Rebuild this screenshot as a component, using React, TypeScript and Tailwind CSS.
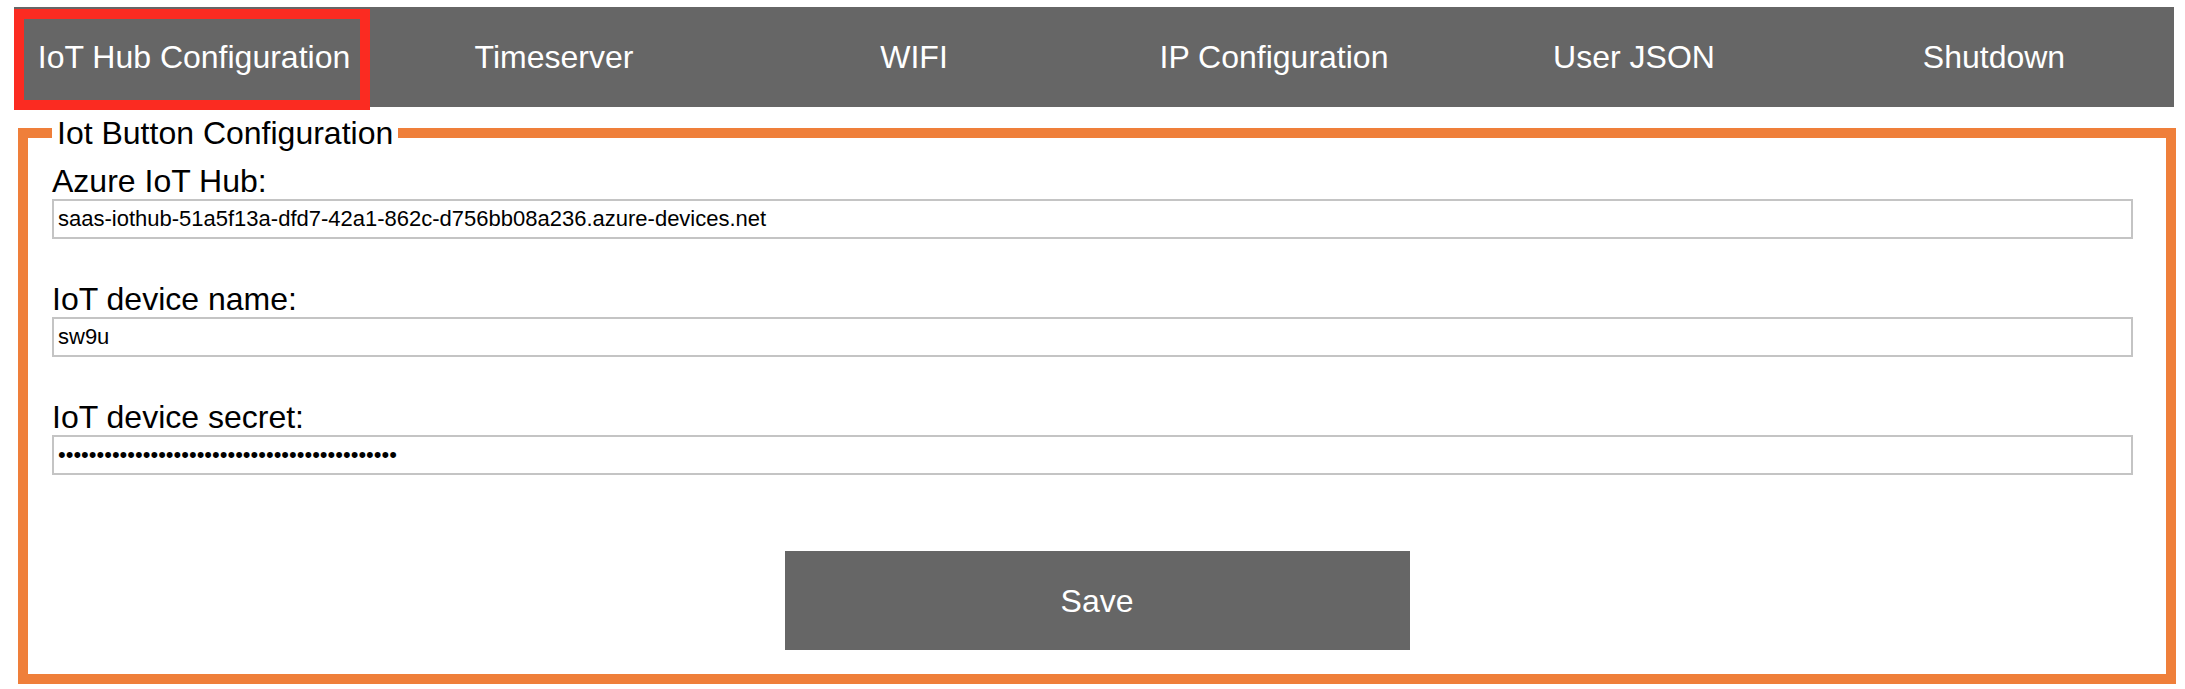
import React, { useState } from 'react';

const tabs = ['IoT Hub Configuration', 'Timeserver', 'WIFI', 'IP Configuration', 'User JSON', 'Shutdown'];

const Field = ({ label, type, value, onChange, first }: { label: string; type: string; value: string; onChange: (v: string) => void; first?: boolean }) => (
  <div className={first ? '' : 'mt-[43px]'}>
    <label className="block h-[35px] text-[32px] leading-[35px] text-black">{label}</label>
    <input
      type={type}
      value={value}
      onChange={(e) => onChange(e.target.value)}
      className="block w-[2081px] h-[40px] border-2 border-[#c4c4c4] bg-white px-[4px] text-[22px] text-black focus:outline-none"
    />
  </div>
);

export default function App() {
  const [hub, setHub] = useState('saas-iothub-51a5f13a-dfd7-42a1-862c-d756bb08a236.azure-devices.net');
  const [name, setName] = useState('sw9u');
  const [secret, setSecret] = useState('abcdefghijklmnopqrstuvwxyzabcdefghijklmnopqr');

  return (
    <div className="w-full min-h-[689px] bg-white pt-[7px] font-['Liberation_Sans',Arial,sans-serif]">
      <nav className="ml-[14px] flex w-[2160px] bg-[#666666]">
        {tabs.map((tab, i) => (
          <div key={tab} className="relative flex h-[100px] w-[360px] items-center justify-center text-[32px] text-white">
            {tab}
            {i === 0 && (
              <div className="pointer-events-none absolute left-0 top-[2px] h-[101px] w-[356px] border-[10px] border-[#fb2b21]" />
            )}
          </div>
        ))}
      </nav>

      <fieldset className="ml-[18px] mt-[2px] w-[2158px] border-[10px] border-[#ef7f3a] pl-[24px] pr-[24px] pt-[7px] pb-[24px]">
        <legend className="px-[5px] text-[32px] text-black">Iot Button Configuration</legend>

        <Field first label="Azure IoT Hub:" type="text" value={hub} onChange={setHub} />
        <Field label="IoT device name:" type="text" value={name} onChange={setName} />
        <Field label="IoT device secret:" type="password" value={secret} onChange={setSecret} />

        <div className="mt-[76px] flex justify-center">
          <button className="h-[99px] w-[625px] bg-[#666666] text-[32px] text-white">Save</button>
        </div>
      </fieldset>
    </div>
  );
}
